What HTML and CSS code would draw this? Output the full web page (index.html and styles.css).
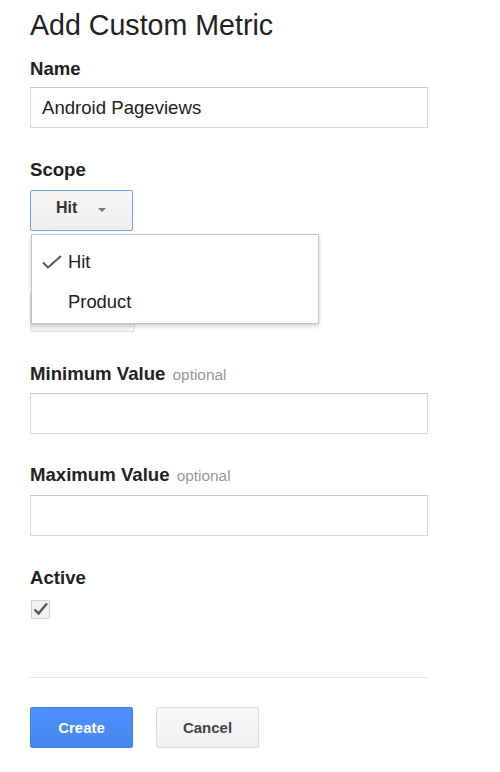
FILE: index.html
```html
<!DOCTYPE html>
<html>
<head>
<meta charset="utf-8">
<link rel="stylesheet" href="styles.css">
</head>
<body>
<div class="page">
  <h1 class="title">Add Custom Metric</h1>

  <div class="field field-first">
    <div class="label">Name</div>
    <div class="input input-gap8"><span class="input-text">Android Pageviews</span></div>
  </div>

  <div class="field">
    <div class="label">Scope</div>
    <div class="scope-wrap">
      <div class="select-btn">
        <span class="select-text">Hit</span>
        <span class="arrow"></span>
      </div>
      <div class="menu">
        <div class="menu-item">
          <span class="check-col">
            <svg width="20" height="14" viewBox="0 0 20 14"><path d="M1 7.5 L6 12.5 L19 1" fill="none" stroke="#555" stroke-width="2"/></svg>
          </span>
          <span>Hit</span>
        </div>
        <div class="menu-item">
          <span class="check-col"></span>
          <span>Product</span>
        </div>
      </div>
    </div>
  </div>

  <div class="hidden-field">
    <div class="hidden-btn"></div>
  </div>

  <div class="field">
    <div class="label">Minimum Value <span class="optional">optional</span></div>
    <div class="input input-gap8"></div>
  </div>

  <div class="field field-max">
    <div class="label">Maximum Value <span class="optional">optional</span></div>
    <div class="input input-gap9"></div>
  </div>

  <div class="field field-active">
    <div class="label">Active</div>
    <div class="checkbox">
      <svg width="17" height="17" viewBox="0 0 17 17"><path d="M2.5 8.5 L6.5 12.5 L15 2.5" fill="none" stroke="#555" stroke-width="2.4"/></svg>
    </div>
  </div>

  <div class="separator"></div>

  <div class="actions">
    <div class="btn btn-primary">Create</div>
    <div class="btn btn-default">Cancel</div>
  </div>
</div>
</body>
</html>
```

FILE: styles.css
```css
html, body {
  margin: 0;
  padding: 0;
  background: #ffffff;
}

.page {
  font-family: "Liberation Sans", Arial, sans-serif;
  color: #222222;
  padding: 9px 0 0 30px;
  width: 398px;
}

.title {
  margin: 0;
  font-size: 28.6px;
  line-height: 32px;
  font-weight: normal;
  color: #222222;
}

.field {
  margin-top: 32px;
}

.field-first {
  margin-top: 18px;
}

.field-max {
  margin-top: 31px;
}

.field-active {
  margin-top: 32px;
}

.label {
  font-size: 18.6px;
  line-height: 20px;
  font-weight: bold;
  color: #222222;
}

.optional {
  font-size: 15.4px;
  font-weight: normal;
  color: #999999;
  margin-left: 2px;
}

.input {
  box-sizing: border-box;
  height: 41px;
  width: 398px;
  border: 1px solid #dadada;
  border-top-color: #c8c8c8;
  background: #ffffff;
  display: flex;
  align-items: center;
  padding-left: 11px;
}

.input-gap8 { margin-top: 8px; }
.input-gap9 { margin-top: 9px; }

.input-text {
  font-size: 18.6px;
  color: #222222;
}

.scope-wrap {
  position: relative;
  margin-top: 10px;
}

.select-btn {
  box-sizing: border-box;
  width: 103px;
  height: 41px;
  border: 1px solid #6ea0f0;
  border-radius: 2px;
  background: linear-gradient(#f6f6f6, #eeeeee);
  display: flex;
  align-items: flex-start;
  padding: 0 0 0 25px;
}

.select-text {
  font-size: 16px;
  font-weight: bold;
  line-height: 33px;
  color: #333333;
}

.arrow {
  width: 0;
  height: 0;
  border-left: 4.5px solid transparent;
  border-right: 4.5px solid transparent;
  border-top: 4px solid #777777;
  margin-left: 21px;
  margin-top: 17px;
}

.menu {
  position: absolute;
  top: 44px;
  left: 1px;
  box-sizing: border-box;
  width: 288px;
  height: 90px;
  background: #ffffff;
  border: 1px solid #c4c4c4;
  box-shadow: 0 2px 4px rgba(0, 0, 0, 0.2);
  padding-top: 7px;
  z-index: 2;
}

.menu-item {
  display: flex;
  align-items: center;
  height: 40px;
  font-size: 18.4px;
  color: #222222;
}

.check-col {
  width: 36px;
  display: flex;
  justify-content: flex-start;
  padding-left: 10px;
  box-sizing: border-box;
}

.hidden-field {
  margin-top: 60px;
}

.hidden-btn {
  box-sizing: border-box;
  width: 105px;
  height: 41px;
  border: 1px solid #dddddd;
  border-radius: 2px;
  background: #f3f3f3;
}

.checkbox {
  box-sizing: border-box;
  margin-top: 12px;
  margin-left: 1px;
  width: 19px;
  height: 19px;
  border: 1px solid #d0d0d0;
  border-radius: 1px;
  background: #f1f1f1;
  display: flex;
  align-items: center;
  justify-content: center;
}

.separator {
  margin-top: 58px;
  height: 1px;
  width: 398px;
  background: #e5e5e5;
}

.actions {
  display: flex;
  gap: 23px;
  margin-top: 29px;
}

.btn {
  box-sizing: border-box;
  height: 41px;
  width: 103px;
  border-radius: 2px;
  font-size: 15px;
  font-weight: bold;
  display: flex;
  align-items: center;
  justify-content: center;
}

.btn-primary {
  background: linear-gradient(#4d90fe, #4787ed);
  border: 1px solid #3f7fe8;
  color: #ffffff;
}

.btn-default {
  background: linear-gradient(#f7f7f7, #f1f1f1);
  border: 1px solid #dcdcdc;
  color: #444444;
}
```
